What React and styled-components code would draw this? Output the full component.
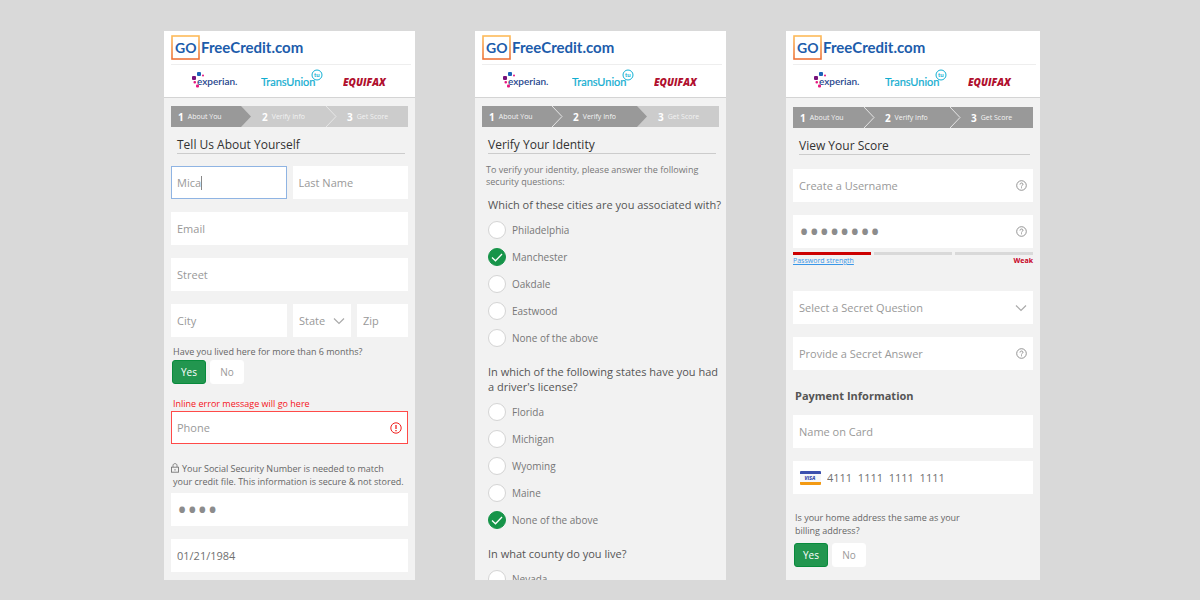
import { useId, useState } from 'react';
import { createGlobalStyle, styled } from 'styled-components';

const GlobalStyle = createGlobalStyle`
	* {
		box-sizing: border-box;
	}
	body {
		margin: 0;
		background: #d9d9d9;
		color: #666;
		font-family: 'Open Sans', 'Liberation Sans', sans-serif;
		font-size: 11px;
	}
	input, select, button {
		font: inherit;
		color: inherit;
	}
`;

const Page = styled.main`
	display: grid;
	grid-template-columns: 251fr 251fr 254fr;
	gap: 60px;
	min-height: 100vh;
	padding: 31px 160px 20px 164px;
`;

const Panel = styled.section`
	height: calc(100vh - 51px);
	overflow: hidden;
	background: #f2f2f2;
`;

const Header = styled.header`
	height: 67px;
	background: #fff;
	border-bottom: 1px solid #d4d4d4;
`;

const BrandRow = styled.div`
	display: flex;
	height: 34px;
	margin: 0 4px 0 7px;
	padding-top: 4px;
	border-bottom: 1px solid #eee;
`;

const BureauRow = styled.div`
	display: flex;
	justify-content: space-between;
	padding: 3px 28px;
`;

const Body = styled.div`
	padding: ${props => props.$top || 8}px 7px 0;
`;

const StepList = styled.ol`
	display: grid;
	grid-template-columns: 70fr 85fr 82fr;
	height: 21px;
	margin: 0;
	padding: 0;
	list-style: none;
`;

const StepItem = styled.li`
	position: relative;
	display: flex;
	align-items: center;
	gap: 4px;
	padding-left: 21px;
	background: ${props => (props.$done ? '#999' : '#ccc')};
	color: #fff;
	font-size: 7px;
	white-space: nowrap;

	&:first-child {
		padding-left: 7px;
	}
	b {
		font-size: 10px;
	}
	span {
		opacity: ${props => (props.$done ? 0.9 : 0.75)};
	}
`;

const StepArrow = styled.svg`
	position: absolute;
	z-index: 1;
	top: 0;
	left: 100%;
	width: 12px;
	height: 21px;
	fill: ${props => (props.$done ? '#999' : '#ccc')};
	stroke: #e6e6e6;
`;

const Title = styled.h1`
	margin: 0 3px ${props => props.$after}px 6px;
	padding-top: 9px;
	border-bottom: 1px solid #ccc;
	color: #333;
	font-size: 12px;
	font-weight: 400;
	line-height: 17px;
`;

const Fields = styled.div`
	display: grid;
	gap: 13px;
`;

const FieldRow = styled.div`
	display: grid;
	grid-template-columns: ${props => props.$columns};
	gap: 6px;
`;

const Field = styled.label`
	display: flex;
	align-items: center;
	height: 33px;
	min-width: 0;
	padding: 0 5px;
	background: #fff;
	border: 1px solid ${props => props.$border || '#fff'};
	color: #999;
`;

const Input = styled.input`
	flex: ${props => (props.$fit ? 'none' : 1)};
	field-sizing: ${props => (props.$fit ? 'content' : 'fixed')};
	min-width: 0;
	padding: 0;
	border: 0;
	outline: 0;
	background: none;
	color: ${props => (props.$dark ? '#707070' : '#999')};

	&::placeholder {
		color: #999;
		opacity: 1;
	}
	&[type='password'] {
		color: #8c8c8c;
		font-size: 27px;
	}
`;

const Caret = styled.i`
	width: 1px;
	height: 14px;
	background: #888;
`;

const Select = styled.select`
	flex: 1;
	min-width: 0;
	padding: 0;
	border: 0;
	outline: 0;
	appearance: none;
	background: none;
	color: #999;
`;

const Note = styled.p`
	margin: ${props => props.$before}px 0 ${props => props.$after}px 2px;
	color: ${props => props.$color || '#666'};
	font-size: 9px;
	line-height: ${props => props.$line || 12}px;
`;

const SecureNote = styled(Note)`
	margin-left: 0;
	white-space: nowrap;

	span {
		display: block;
		padding-left: 2px;
	}
	svg {
		margin-right: 3px;
		vertical-align: -1px;
	}
`;

const Choices = styled.div`
	display: flex;
	gap: 4px;
	padding-left: 1px;
`;

const ChoiceButton = styled.button`
	width: 34px;
	height: 24px;
	padding: 0;
	border: 1px solid ${props => (props.$on ? '#088a3c' : '#fff')};
	border-radius: 3px;
	background: ${props => (props.$on ? '#22964f' : '#fff')};
	color: ${props => (props.$on ? '#fff' : '#999')};
	font-size: 10px;
	font-weight: ${props => (props.$on ? 500 : 400)};
`;

const Question = styled.h2`
	margin: ${props => props.$before}px 0 4px 6px;
	color: #555;
	font-size: 11px;
	font-weight: 400;
	line-height: 15px;
	white-space: nowrap;
`;

const Option = styled.label`
	display: flex;
	align-items: center;
	gap: 6px;
	height: 27px;
	padding-left: 6px;
	color: #777;
	font-size: 10px;
`;

const RadioBox = styled.span`
	display: grid;

	> * {
		grid-area: 1 / 1;
	}
	svg {
		pointer-events: none;
	}
`;

const Radio = styled.input`
	width: 18px;
	height: 18px;
	margin: 0;
	appearance: none;
	border: 1px solid #d4d4d4;
	border-radius: 50%;
	background: #fff;

	&:checked {
		border-color: #169449;
		background: #169449;
	}
	& + svg {
		visibility: hidden;
	}
	&:checked + svg {
		visibility: visible;
	}
`;

const Meter = styled.div`
	display: grid;
	grid-template-columns: repeat(3, 1fr);
	gap: 3px;
	margin-top: 4px;
`;

const MeterBar = styled.span`
	height: 3px;
	background: ${props => (props.$filled ? '#c00' : '#d9d9d9')};
`;

const MeterCaption = styled.div`
	display: flex;
	justify-content: space-between;
	margin: 1px 0 25px;
	font-size: 7px;
	line-height: 10px;

	a {
		color: #3a97e8;
	}
	strong {
		color: #c8001e;
	}
`;

const SectionTitle = styled.h2`
	margin: 18px 0 12px 2px;
	color: #555;
	font-size: 11px;
	font-weight: 700;
	line-height: 15px;
`;

const IntroText = styled(Note)`
	margin-left: 4px;
	color: #777;
`;

const CardField = styled(Field)`
	gap: 6px;
	padding-left: 6px;
`;

const BrandLogo = () => {
	const id = useId();
	return (
		<svg width="140" height="26" role="img" aria-label="GO FreeCredit.com">
			<defs>
				<linearGradient id={id} x1="0" y1="0" x2="0" y2="1">
					<stop offset="0" stopColor="#fdbb5a" />
					<stop offset="1" stopColor="#ee7238" />
				</linearGradient>
			</defs>
			<rect x="1" y="1" width="27" height="23" fill="#fff" stroke={`url(#${id})`} strokeWidth="1.6" />
			<g fill="#1c5cab" fontFamily="Lato, sans-serif" fontWeight="700">
				<text x="4" y="18" fontSize="14">GO</text>
				<text x="30" y="18" fontSize="15">FreeCredit.com</text>
			</g>
		</svg>
	);
};

const ExperianLogo = () => (
	<svg width="50" height="24" role="img" aria-label="experian">
		<rect x="0" y="8" width="4" height="4" rx="1" fill="#77127b" />
		<rect x="5" y="4" width="4" height="4" rx="1" fill="#1d63b8" />
		<rect x="10" y="6.500" width="2" height="2" rx="1" fill="#e5177f" />
		<rect x="1.500" y="13" width="2.500" height="2.500" rx="1" fill="#e5177f" />
		<rect x="4" y="16.500" width="3" height="3" rx="1" fill="#e5177f" />
		<text x="5" y="17" fill="#26478d" fontFamily="Lato, sans-serif" fontSize="10" fontWeight="600">experian.</text>
	</svg>
);

const TransUnionLogo = () => (
	<svg width="63" height="24" role="img" aria-label="TransUnion">
		<text x="0" y="18" fill="#12add0" fontFamily="Lato, sans-serif" fontSize="11" fontWeight="400" stroke="#12add0" strokeWidth="0.2">TransUnion</text>
		<circle cx="56" cy="7" r="5" fill="none" stroke="#12b0d4" />
		<text x="53" y="9" fill="#12b0d4" fontFamily="Lato, sans-serif" fontSize="6" fontWeight="700">tu</text>
	</svg>
);

const EquifaxLogo = () => (
	<svg width="44" height="24" role="img" aria-label="Equifax">
		<text x="0" y="18" fill="#b0102e" fontFamily="Open Sans, sans-serif" fontSize="10" fontStyle="italic" fontWeight="800">EQUIFAX</text>
	</svg>
);

const ChevronIcon = () => (
	<svg width="12" height="8" fill="none" stroke="#aaa" strokeWidth="1.2">
		<path d="M1 1.500 6 6.500 11 1.500" />
	</svg>
);

const HelpIcon = () => (
	<svg width="11" height="11" viewBox="0 0 11 11" fill="none" stroke="#888" strokeWidth="0.9">
		<circle cx="5.500" cy="5.500" r="4.800" />
		<path d="M4 4.500C4 2.500 7 2.600 7 4.300C7 5.300 5.500 5.300 5.500 6.500M5.500 7.300V8.300" />
	</svg>
);

const AlertIcon = () => (
	<svg width="12" height="12" fill="none" stroke="#f0201e">
		<circle cx="6" cy="6" r="5.200" />
		<path d="M6 3V7M6 8V9.300" strokeWidth="1.300" />
	</svg>
);

const LockIcon = () => (
	<svg width="8" height="10" fill="none" stroke="#777" strokeWidth="0.9">
		<rect x="0.500" y="4.200" width="7" height="5" />
		<path d="M2 4V2.500C2 0 6 0 6 2.500V4M4 6V7.600" />
	</svg>
);

const VisaIcon = () => (
	<svg width="21" height="14" role="img" aria-label="Visa">
		<rect width="21" height="14" rx="1" fill="#f6f6f8" />
		<path d="M0 3V1Q0 0 1 0H20Q21 0 21 1V3Z" fill="#3c50ae" />
		<path d="M0 11H21V13Q21 14 20 14H1Q0 14 0 13Z" fill="#f39a13" />
		<text x="4.500" y="9.200" fill="#3c50ae" fontFamily="Open Sans, sans-serif" fontSize="5" fontStyle="italic" fontWeight="800">VISA</text>
	</svg>
);

const CheckIcon = () => (
	<svg width="18" height="18" fill="none" stroke="#fff" strokeWidth="1.300">
		<path d="M4 9.500 7.500 12.800 14 6" />
	</svg>
);

const steps = ['About You', 'Verify Info', 'Get Score'];

const Steps = ({ current }) => (
	<StepList>
		{steps.map((step, i) => {
			const done = i < current;
			const divided = done === i + 1 < current;
			return (
				<StepItem key={step} $done={done}>
					<b>{i + 1}</b>
					<span>{step}</span>
					{i < 2 && (
						<StepArrow $done={done}>
							<path d="M0 0 10 10.500 0 21Z" stroke="none" />
							{divided && <path d="M0 0 10 10.500 0 21" fill="none" />}
						</StepArrow>
					)}
				</StepItem>
			);
		})}
	</StepList>
);

const Screen = ({ step, title, top, after, children }) => (
	<Panel>
		<Header>
			<BrandRow>
				<BrandLogo />
			</BrandRow>
			<BureauRow>
				<ExperianLogo />
				<TransUnionLogo />
				<EquifaxLogo />
			</BureauRow>
		</Header>
		<Body $top={top}>
			<Steps current={step} />
			<Title $after={after}>{title}</Title>
			{children}
		</Body>
	</Panel>
);

const TextField = ({ label, icon, ...props }) => (
	<Field>
		<Input aria-label={label} placeholder={label} {...props} />
		{icon}
	</Field>
);

const SelectField = ({ label }) => (
	<Field>
		<Select aria-label={label}>
			<option>{label}</option>
		</Select>
		<ChevronIcon />
	</Field>
);

const YesNo = ({ label }) => {
	const [yes, setYes] = useState(true);
	return (
		<Choices role="group" aria-label={label}>
			<ChoiceButton type="button" $on={yes} aria-pressed={yes} onClick={() => setYes(true)}>
				Yes
			</ChoiceButton>
			<ChoiceButton type="button" $on={!yes} aria-pressed={!yes} onClick={() => setYes(false)}>
				No
			</ChoiceButton>
		</Choices>
	);
};

const RadioQuestion = ({ before, title, options, selected }) => {
	const id = useId();
	return (
		<div role="radiogroup" aria-labelledby={id}>
			<Question id={id} $before={before}>
				{title}
			</Question>
			{options.map(option => (
				<Option key={option}>
					<RadioBox>
						<Radio type="radio" name={id} defaultChecked={option === selected} />
						<CheckIcon />
					</RadioBox>
					{option}
				</Option>
			))}
		</div>
	);
};

const AboutYou = () => (
	<Screen step={1} title="Tell Us About Yourself" after={12}>
		<Fields>
			<FieldRow $columns="1fr 1fr">
				<Field $border="#8fb4e3">
					<Input $fit aria-label="First Name" defaultValue="Mica" />
					<Caret />
				</Field>
				<TextField label="Last Name" />
			</FieldRow>
			<TextField label="Email" type="email" />
			<TextField label="Street" />
			<FieldRow $columns="116fr 58fr 51fr">
				<TextField label="City" />
				<SelectField label="State" />
				<TextField label="Zip" />
			</FieldRow>
		</Fields>
		<Note $before={9} $after={2}>Have you lived here for more than 6 months?</Note>
		<YesNo label="Have you lived here for more than 6 months?" />
		<Note id="phone-error" $before={14} $after={1} $color="#f5121b">Inline error message will go here</Note>
		<Field $border="#ff4a48">
			<Input type="tel" aria-label="Phone" aria-describedby="phone-error" aria-invalid placeholder="Phone" />
			<AlertIcon />
		</Field>
		<SecureNote $before={18} $after={5} $line={13}>
			<LockIcon />
			Your Social Security Number is needed to match
			<span>your credit file. This information is secure &amp; not stored.</span>
		</SecureNote>
		<Fields>
			<TextField label="Social Security Number" type="password" defaultValue="1234" />
			<TextField label="Date of Birth" defaultValue="01/21/1984" $dark />
		</Fields>
	</Screen>
);

const VerifyInfo = () => (
	<Screen step={2} title="Verify Your Identity" after={10}>
		<IntroText $before={0} $after={0}>
			To verify your identity, please answer the following
			<br />
			security questions:
		</IntroText>
		<RadioQuestion
			before={9}
			title="Which of these cities are you associated with?"
			options={['Philadelphia', 'Manchester', 'Oakdale', 'Eastwood', 'None of the above']}
			selected="Manchester"
		/>
		<RadioQuestion
			before={13}
			title={<>In which of the following states have you had<br />a driver's license?</>}
			options={['Florida', 'Michigan', 'Wyoming', 'Maine', 'None of the above']}
			selected="None of the above"
		/>
		<RadioQuestion before={13} title="In what county do you live?" options={['Nevada']} />
	</Screen>
);

const GetScore = () => (
	<Screen step={3} title="View Your Score" top={9} after={14}>
		<Fields>
			<TextField label="Create a Username" icon={<HelpIcon />} />
			<TextField label="Password" type="password" defaultValue="password" icon={<HelpIcon />} />
		</Fields>
		<Meter>
			<MeterBar $filled />
			<MeterBar />
			<MeterBar />
		</Meter>
		<MeterCaption>
			<a href="#strength">Password strength</a>
			<strong>Weak</strong>
		</MeterCaption>
		<Fields>
			<SelectField label="Select a Secret Question" />
			<TextField label="Provide a Secret Answer" icon={<HelpIcon />} />
		</Fields>
		<SectionTitle>Payment Information</SectionTitle>
		<Fields>
			<TextField label="Name on Card" />
			<CardField>
				<VisaIcon />
				<Input aria-label="Card Number" defaultValue="4111  1111  1111  1111" $dark />
			</CardField>
		</Fields>
		<Note $before={17} $after={6} $line={13}>
			Is your home address the same as your
			<br />
			billing address?
		</Note>
		<YesNo label="Is your home address the same as your billing address?" />
	</Screen>
);

const App = () => (
	<>
		<GlobalStyle />
		<Page>
			<AboutYou />
			<VerifyInfo />
			<GetScore />
		</Page>
	</>
);

export default App;
